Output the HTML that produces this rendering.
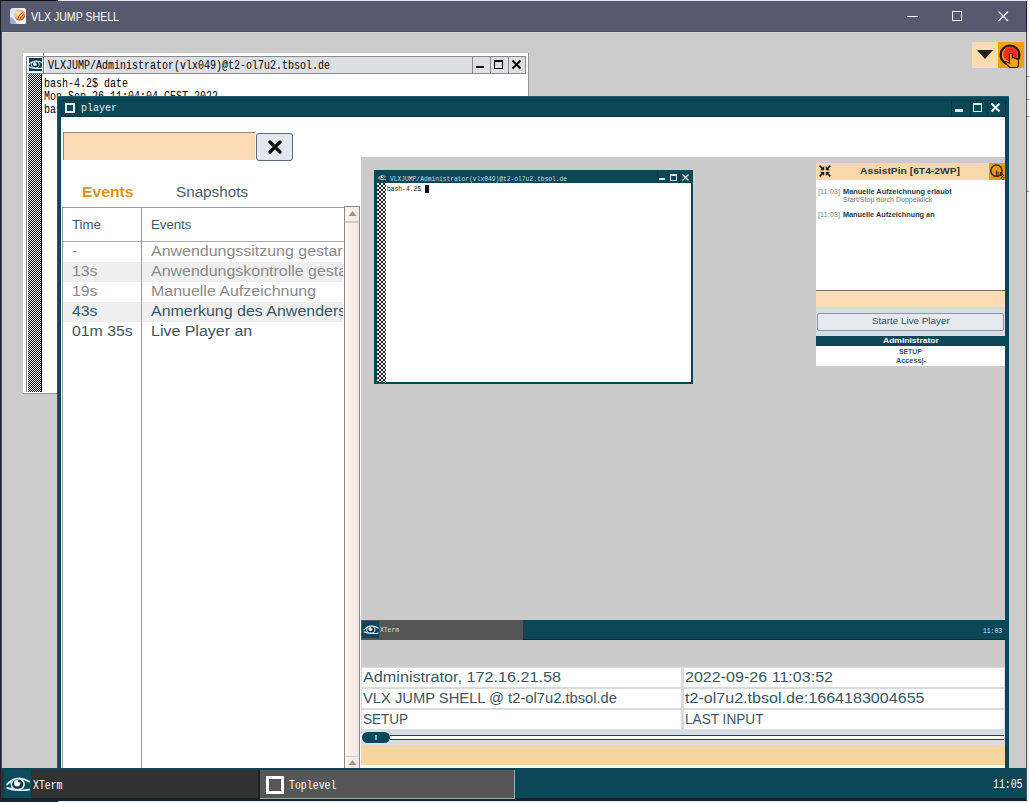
<!DOCTYPE html>
<html><head><meta charset="utf-8">
<style>
*{margin:0;padding:0;box-sizing:border-box}
html,body{width:1029px;height:802px;overflow:hidden;background:#eeeef2;font-family:"Liberation Sans",sans-serif}
.a{position:absolute}
.t{white-space:pre}
</style></head><body>
<div class="a" style="left:0px;top:0px;width:1027px;height:802px;background:#1c1f2c"></div>
<div class="a" style="left:1026px;top:32px;width:1px;height:768px;background:#505050"></div>
<div class="a" style="left:1027px;top:76px;width:2px;height:1px;background:#777"></div>
<div class="a" style="left:1027px;top:99px;width:2px;height:1px;background:#777"></div>
<div class="a" style="left:1027px;top:116px;width:2px;height:1px;background:#777"></div>
<div class="a" style="left:1027px;top:191px;width:2px;height:1px;background:#777"></div>
<div class="a" style="left:0px;top:0px;width:58px;height:1px;background:#0e1020"></div>
<div class="a" style="left:58px;top:0px;width:971px;height:1px;background:#e8e8f2"></div>
<div class="a" style="left:1px;top:1px;width:1025px;height:31px;background:#555a6e"></div>
<div class="a" style="left:1px;top:32px;width:1025px;height:736px;background:#4a4e5e"></div>
<div class="a" style="left:2px;top:32px;width:1024px;height:736px;background:#cccccc"></div>
<div class="a" style="left:2px;top:32px;width:1024px;height:1px;background:#d4d4d8"></div>
<div class="a" style="left:1px;top:1px;width:1025px;height:31px;background:#555a6e"></div>
<div class="a" style="left:1px;top:31px;width:1025px;height:1px;background:#505468"></div>
<div class="a t" style="left:31px;top:10.80px;font-family:'Liberation Sans',sans-serif;font-size:12px;line-height:12px;color:#fff;transform:scaleX(0.8816);transform-origin:0 0;">VLX JUMP SHELL</div>
<div class="a" style="left:907px;top:16px;width:11px;height:1px;background:#fff"></div>
<div class="a" style="left:952px;top:11px;width:10px;height:10px;border:1px solid #fff"></div>
<svg class="a" style="left:997px;top:10px" width="12" height="12"><path d="M1.5 1.5L11 11M11 1.5L1.5 11" stroke="#fff" stroke-width="1.2"/></svg>
<div class="a" style="left:972px;top:42px;width:26px;height:26px;background:#fbdcb0"></div>
<svg class="a" style="left:977px;top:50px" width="16" height="9"><path d="M0 0H16L8 9Z" fill="#222"/></svg>
<div class="a" style="left:998px;top:42px;width:26px;height:26px;background:#efa012"></div>
<div class="a" style="left:23px;top:53px;width:506px;height:341px;background:#fff;border-right:1px solid #999;border-bottom:1px solid #999"></div>
<div class="a" style="left:26px;top:56px;width:500px;height:18px;background:#dcdfe3;border:1px solid #888"></div>
<div class="a" style="left:27px;top:57px;width:16px;height:16px;background:#eef6f8"></div>
<div class="a" style="left:29px;top:58px;width:13px;height:13px;background:#0a3e50"></div>
<div class="a" style="left:43px;top:53px;width:1px;height:20px;background:#7a7a7a"></div>
<div class="a" style="left:44px;top:57px;width:1px;height:16px;background:#fff"></div>
<div class="a t" style="left:48px;top:58.74px;font-family:'Liberation Mono',monospace;font-size:13.5px;line-height:13.5px;color:#000;transform:scaleX(0.7406);transform-origin:0 0;">VLXJUMP/Administrator(vlx049)@t2-ol7u2.tbsol.de</div>
<div class="a" style="left:28px;top:74px;width:13px;height:318px;background:repeating-conic-gradient(#000 0 25%,#fff 0 50%) 0 0/2px 2px"></div>
<div class="a" style="left:41px;top:74px;width:1px;height:318px;background:#000"></div>
<div class="a" style="left:26px;top:74px;width:1px;height:318px;background:#888"></div>
<div class="a t" style="left:44px;top:77.12px;font-family:'Liberation Mono',monospace;font-size:13px;line-height:13px;color:#000;transform:scaleX(0.7691);transform-origin:0 0;">bash-4.2$ date</div>
<div class="a t" style="left:44px;top:90.12px;font-family:'Liberation Mono',monospace;font-size:13px;line-height:13px;color:#000;transform:scaleX(0.7691);transform-origin:0 0;">Mon Sep 26 11:04:04 CEST 2022</div>
<div class="a t" style="left:44px;top:103.12px;font-family:'Liberation Mono',monospace;font-size:13px;line-height:13px;color:#000;transform:scaleX(0.7691);transform-origin:0 0;">bash-4.2$ </div>
<div class="a" style="left:57px;top:96px;width:952px;height:672px;background:#0a4858"></div>
<div class="a" style="left:61px;top:117px;width:944px;height:651px;background:#fff"></div>
<div class="a" style="left:57px;top:96px;width:952px;height:1px;background:#1b5c72"></div>
<div class="a" style="left:57px;top:96px;width:1px;height:672px;background:#1b5c72"></div>
<div class="a" style="left:61px;top:100px;width:944px;height:1px;background:#073646"></div>
<div class="a" style="left:61px;top:116px;width:944px;height:1px;background:#073646"></div>
<div class="a" style="left:61px;top:100px;width:1px;height:17px;background:#073646"></div>
<div class="a" style="left:77px;top:100px;width:1px;height:17px;background:#073646"></div>
<div class="a" style="left:65px;top:103px;width:10px;height:10px;border:2px solid #e6f4f7"></div>
<div class="a t" style="left:81px;top:103.90px;font-family:'Liberation Mono',monospace;font-size:10px;line-height:10px;color:#dff2f6;transform:scaleX(0.9997);transform-origin:0 0;">player</div>
<div class="a" style="left:63px;top:132px;width:192px;height:28px;background:#fddbb4;border-top:1px solid #a08870;border-left:1px solid #a08870"></div>
<div class="a" style="left:256px;top:133px;width:37px;height:28px;background:#e4e8ee;border:1px solid #5a6a7a;border-radius:3px"></div>
<div class="a t" style="left:82px;top:185.10px;font-family:'Liberation Sans',sans-serif;font-size:14px;line-height:14px;color:#e0901a;font-weight:bold;transform:scaleX(1.1218);transform-origin:0 0;">Events</div>
<div class="a t" style="left:176px;top:185.10px;font-family:'Liberation Sans',sans-serif;font-size:14px;line-height:14px;color:#4a6070;transform:scaleX(1.0883);transform-origin:0 0;">Snapshots</div>
<div class="a" style="left:62px;top:207px;width:282px;height:561px;border-top:1px solid #999;border-left:1px solid #999"></div>
<div class="a" style="left:63px;top:241px;width:281px;height:1px;background:#aaa"></div>
<div class="a" style="left:141px;top:208px;width:1px;height:560px;background:#999"></div>
<div class="a t" style="left:72px;top:218.50px;font-family:'Liberation Sans',sans-serif;font-size:12px;line-height:12px;color:#405868;transform:scaleX(1.1060);transform-origin:0 0;">Time</div>
<div class="a t" style="left:151px;top:218.50px;font-family:'Liberation Sans',sans-serif;font-size:12px;line-height:12px;color:#405868;transform:scaleX(1.1012);transform-origin:0 0;">Events</div>
<div class="a" style="left:361px;top:157px;width:644px;height:483px;background:#cbcbcb"></div>
<div class="a" style="left:361px;top:620px;width:644px;height:20px;background:#0a4858"></div>
<div class="a" style="left:361px;top:639px;width:644px;height:1px;background:#062c38"></div>
<div class="a" style="left:361px;top:620px;width:162px;height:20px;background:#555"></div>
<div class="a" style="left:361px;top:640px;width:644px;height:28px;background:#cbcbcb"></div>
<div class="a" style="left:1px;top:768px;width:1025px;height:32px;background:#0a4858"></div>
<div class="a" style="left:1px;top:798px;width:1025px;height:3px;background:#14222a"></div>
<div class="a" style="left:58px;top:801px;width:971px;height:1px;background:#e6e6ee"></div>
<div class="a" style="left:2px;top:770px;width:256px;height:28px;background:#333232"></div>
<div class="a" style="left:258px;top:770px;width:2px;height:29px;background:#1a2428"></div>
<div class="a" style="left:260px;top:770px;width:255px;height:28px;background:#565656"></div>
<div class="a" style="left:63px;top:242px;width:280px;height:526px;overflow:hidden">
<div class="a" style="left:0px;top:20px;width:280px;height:20px;background:#efefef"></div>
<div class="a" style="left:0px;top:60px;width:280px;height:20px;background:#efefef"></div>
</div>
<div class="a" style="left:141px;top:242px;width:1px;height:526px;background:#999"></div>
<div class="a" style="left:63px;top:242px;width:280px;height:526px;overflow:hidden">
<div class="a t" style="left:9px;top:2.10px;font-family:'Liberation Sans',sans-serif;font-size:14px;line-height:14px;color:#8a8a8a;transform:scaleX(1.1300);transform-origin:0 0;">-</div>
<div class="a t" style="left:88px;top:2.10px;font-family:'Liberation Sans',sans-serif;font-size:14px;line-height:14px;color:#8a8a8a;transform:scaleX(1.1400);transform-origin:0 0;">Anwendungssitzung gestartet</div>
<div class="a t" style="left:9px;top:22.10px;font-family:'Liberation Sans',sans-serif;font-size:14px;line-height:14px;color:#8a8a8a;transform:scaleX(1.1300);transform-origin:0 0;">13s</div>
<div class="a t" style="left:88px;top:22.10px;font-family:'Liberation Sans',sans-serif;font-size:14px;line-height:14px;color:#8a8a8a;transform:scaleX(1.1400);transform-origin:0 0;">Anwendungskontrolle gestartet</div>
<div class="a t" style="left:9px;top:42.10px;font-family:'Liberation Sans',sans-serif;font-size:14px;line-height:14px;color:#8a8a8a;transform:scaleX(1.1300);transform-origin:0 0;">19s</div>
<div class="a t" style="left:88px;top:42.10px;font-family:'Liberation Sans',sans-serif;font-size:14px;line-height:14px;color:#8a8a8a;transform:scaleX(1.1400);transform-origin:0 0;">Manuelle Aufzeichnung</div>
<div class="a t" style="left:9px;top:62.10px;font-family:'Liberation Sans',sans-serif;font-size:14px;line-height:14px;color:#385565;transform:scaleX(1.1300);transform-origin:0 0;">43s</div>
<div class="a t" style="left:88px;top:62.10px;font-family:'Liberation Sans',sans-serif;font-size:14px;line-height:14px;color:#385565;transform:scaleX(1.1400);transform-origin:0 0;">Anmerkung des Anwenders</div>
<div class="a t" style="left:9px;top:82.10px;font-family:'Liberation Sans',sans-serif;font-size:14px;line-height:14px;color:#385565;transform:scaleX(1.1300);transform-origin:0 0;">01m 35s</div>
<div class="a t" style="left:88px;top:82.10px;font-family:'Liberation Sans',sans-serif;font-size:14px;line-height:14px;color:#385565;transform:scaleX(1.1400);transform-origin:0 0;">Live Player an</div>
</div>
<div class="a" style="left:344px;top:206px;width:16px;height:562px;border:1px solid #8a8a8a;border-bottom:none;background:linear-gradient(90deg,#fbf7f4,#f3e4e2)"></div>
<div class="a" style="left:345px;top:221px;width:14px;height:2px;background:#dcc8c4"></div>
<svg class="a" style="left:347px;top:209px" width="11" height="8"><path d="M1.5 7H9.5L5.5 2Z" fill="#999"/></svg>
<div class="a" style="left:345px;top:756px;width:14px;height:1px;background:#dcc8c4"></div>
<svg class="a" style="left:347px;top:758px" width="11" height="8"><path d="M1.5 7H9.5L5.5 2Z" fill="#999"/></svg>
<div class="a" style="left:361px;top:667px;width:644px;height:78px;background:#d6dde4"></div>
<div class="a" style="left:361px;top:667px;width:644px;height:62px;background:#dadada"></div>
<div class="a" style="left:362px;top:668px;width:319px;height:19px;background:#fff"></div>
<div class="a" style="left:684px;top:668px;width:320px;height:19px;background:#fff"></div>
<div class="a" style="left:362px;top:689px;width:319px;height:19px;background:#fff"></div>
<div class="a" style="left:684px;top:689px;width:320px;height:19px;background:#fff"></div>
<div class="a" style="left:362px;top:710px;width:319px;height:19px;background:#fff"></div>
<div class="a" style="left:684px;top:710px;width:320px;height:19px;background:#fff"></div>
<div class="a t" style="left:363px;top:670.10px;font-family:'Liberation Sans',sans-serif;font-size:14px;line-height:14px;color:#38566a;transform:scaleX(1.1564);transform-origin:0 0;">Administrator, 172.16.21.58</div>
<div class="a t" style="left:685px;top:670.10px;font-family:'Liberation Sans',sans-serif;font-size:14px;line-height:14px;color:#38566a;transform:scaleX(1.1477);transform-origin:0 0;">2022-09-26 11:03:52</div>
<div class="a t" style="left:363px;top:691.10px;font-family:'Liberation Sans',sans-serif;font-size:14px;line-height:14px;color:#38566a;transform:scaleX(1.0520);transform-origin:0 0;">VLX JUMP SHELL @ t2-ol7u2.tbsol.de</div>
<div class="a t" style="left:685px;top:691.10px;font-family:'Liberation Sans',sans-serif;font-size:14px;line-height:14px;color:#38566a;transform:scaleX(1.1480);transform-origin:0 0;">t2-ol7u2.tbsol.de:1664183004655</div>
<div class="a t" style="left:363px;top:712.10px;font-family:'Liberation Sans',sans-serif;font-size:14px;line-height:14px;color:#38566a;transform:scaleX(0.9641);transform-origin:0 0;">SETUP</div>
<div class="a t" style="left:685px;top:712.10px;font-family:'Liberation Sans',sans-serif;font-size:14px;line-height:14px;color:#38566a;transform:scaleX(0.9734);transform-origin:0 0;">LAST INPUT</div>
<div class="a" style="left:361px;top:729px;width:644px;height:16px;background:#d6dde4"></div>
<div class="a" style="left:390px;top:735px;width:614px;height:5px;border-top:1px solid #0a4858;border-bottom:1px solid #0a4858;background:#fff"></div>
<div class="a" style="left:362px;top:732px;width:28px;height:11px;background:#0a4858;border-radius:6px"></div>
<div class="a" style="left:375px;top:735px;width:2px;height:5px;background:#7fb4c8"></div>
<div class="a" style="left:361px;top:745px;width:644px;height:20px;background:#f5d5a2"></div>
<div class="a" style="left:361px;top:765px;width:644px;height:3px;background:#fffdf5"></div>
<div class="a" style="left:374px;top:170px;width:319px;height:214px;background:#0a4858"></div>
<div class="a" style="left:386px;top:183px;width:305px;height:199px;background:#fff"></div>
<div class="a" style="left:377px;top:183px;width:9px;height:199px;background:repeating-conic-gradient(#222 0 25%,#eee 0 50%) 0 0/4px 4px"></div>
<div class="a t" style="left:390px;top:175.68px;font-family:'Liberation Mono',monospace;font-size:7px;line-height:7px;color:#c8dce4;transform:scaleX(0.8967);transform-origin:0 0;">VLXJUMP/Administrator(vlx049)@t2-ol7u2.tbsol.de</div>
<div class="a t" style="left:387px;top:186.18px;font-family:'Liberation Mono',monospace;font-size:7px;line-height:7px;color:#222;transform:scaleX(0.8995);transform-origin:0 0;">bash-4.2$</div>
<div class="a" style="left:425px;top:185px;width:4px;height:8px;background:#000"></div>
<div class="a" style="left:659px;top:178px;width:6px;height:2px;background:#d8e4ea"></div>
<div class="a" style="left:670px;top:174px;width:7px;height:7px;border:1px solid #d8e4ea;border-top-width:2px"></div>
<svg class="a" style="left:681px;top:173px" width="9" height="9"><path d="M1.5 1.5L7.5 7.5M7.5 1.5L1.5 7.5" stroke="#e8f0f4" stroke-width="1.3"/></svg>
<div class="a" style="left:657px;top:171px;width:1px;height:12px;background:#0a3a4a"></div>
<div class="a" style="left:668px;top:171px;width:1px;height:12px;background:#0a3a4a"></div>
<div class="a" style="left:679px;top:171px;width:1px;height:12px;background:#0a3a4a"></div>
<div class="a" style="left:816px;top:163px;width:189px;height:203px;background:#fff"></div>
<div class="a" style="left:816px;top:163px;width:189px;height:17px;background:#f8d8a8"></div>
<div class="a" style="left:989px;top:163px;width:16px;height:17px;background:#e69a1e"></div>
<div class="a t" style="left:860px;top:166.55px;font-family:'Liberation Sans',sans-serif;font-size:9px;line-height:9px;color:#1e3c48;font-weight:bold;transform:scaleX(1.1427);transform-origin:0 0;">AssistPin [6T4-2WP]</div>
<div class="a t" style="left:818px;top:188.05px;font-family:'Liberation Sans',sans-serif;font-size:7px;line-height:7px;color:#7a8a95;transform:scaleX(1.0530);transform-origin:0 0;">[11:03]</div>
<div class="a t" style="left:843px;top:188.05px;font-family:'Liberation Sans',sans-serif;font-size:7px;line-height:7px;color:#1e3c48;font-weight:bold;transform:scaleX(1.0532);transform-origin:0 0;">Manuelle Aufzeichnung erlaubt</div>
<div class="a t" style="left:843px;top:196.05px;font-family:'Liberation Sans',sans-serif;font-size:7px;line-height:7px;color:#6a7a85;transform:scaleX(1.0076);transform-origin:0 0;">Start/Stop durch Doppelklick</div>
<div class="a t" style="left:818px;top:210.75px;font-family:'Liberation Sans',sans-serif;font-size:7px;line-height:7px;color:#7a8a95;transform:scaleX(1.0530);transform-origin:0 0;">[11:03]</div>
<div class="a t" style="left:843px;top:210.75px;font-family:'Liberation Sans',sans-serif;font-size:7px;line-height:7px;color:#1e3c48;font-weight:bold;transform:scaleX(1.0405);transform-origin:0 0;">Manuelle Aufzeichnung an</div>
<div class="a" style="left:816px;top:290px;width:189px;height:17px;background:#fddbb4;border-top:1px solid #6a6a6a"></div>
<div class="a" style="left:816px;top:307px;width:189px;height:29px;background:#d5dde5"></div>
<div class="a" style="left:817px;top:313px;width:187px;height:18px;background:#e6eaef;border:1px solid #8a9aa8;border-radius:2px"></div>
<div class="a t" style="left:872px;top:317.45px;font-family:'Liberation Sans',sans-serif;font-size:9px;line-height:9px;color:#3a4a55;transform:scaleX(1.0939);transform-origin:0 0;">Starte Live Player</div>
<div class="a" style="left:816px;top:336px;width:189px;height:10px;background:#0a4858"></div>
<div class="a t" style="left:883px;top:337.20px;font-family:'Liberation Sans',sans-serif;font-size:8px;line-height:8px;color:#fff;font-weight:bold;transform:scaleX(1.0637);transform-origin:0 0;">Administrator</div>
<div class="a t" style="left:899.4px;top:347.82px;font-family:'Liberation Sans',sans-serif;font-size:7.5px;line-height:7.5px;color:#3a5868;font-weight:bold;transform:scaleX(0.9078);transform-origin:0 0;">SETUP</div>
<div class="a t" style="left:895.5px;top:357.23px;font-family:'Liberation Sans',sans-serif;font-size:7.5px;line-height:7.5px;color:#3a5868;font-weight:bold;transform:scaleX(0.9718);transform-origin:0 0;">Access|-</div>
<div class="a" style="left:362px;top:621px;width:17px;height:17px;background:#0e4858"></div>
<div class="a t" style="left:380px;top:627.48px;font-family:'Liberation Mono',monospace;font-size:7px;line-height:7px;color:#ddd;transform:scaleX(0.9048);transform-origin:0 0;">XTerm</div>
<div class="a t" style="left:983px;top:627.68px;font-family:'Liberation Mono',monospace;font-size:7px;line-height:7px;color:#cfe0e8;transform:scaleX(0.9048);transform-origin:0 0;">11:03</div>
<svg width="0" height="0" style="position:absolute"><defs>
<symbol id="eye" viewBox="0 0 24 14">
<path d="M0.5 7.8Q11 -3.2 23.8 5" fill="none" stroke="#dff3f7" stroke-width="1.7"/>
<path d="M0.5 10.6Q13 15.2 23.8 12.4" fill="none" stroke="#dff3f7" stroke-width="1.7"/>
<ellipse cx="11.7" cy="7.2" rx="6.4" ry="5.4" fill="#08303e" stroke="#dff3f7" stroke-width="1.6"/>
<circle cx="11.2" cy="6.3" r="3.2" fill="#f2fbfd"/>
<circle cx="13.6" cy="4.2" r="1.4" fill="#08303e"/>
</symbol>
<symbol id="touch" viewBox="0 0 26 26">
<circle cx="12" cy="13" r="9.4" fill="none" stroke="#2a1608" stroke-width="2.3"/>
<circle cx="12.6" cy="12.2" r="7.3" fill="#ff2a1e"/>
<path d="M12.8 11.3c1-0.1 1.5 0.5 1.5 1.3v3.2c1-0.5 2.2-0.2 2.4 0.6c0.9-0.3 1.9 0 2.1 0.8c0.8-0.2 1.6 0.2 1.7 1v4.2c0 1.4-0.6 2.4-1.4 3.1H11.8L7.4 21c-0.5-0.6 0.1-1.6 1-1.3l3 1.4v-8.4c0-0.8 0.5-1.4 1.4-1.4z" fill="#f0a41a" stroke="#2a1608" stroke-width="1.1"/>
</symbol>
</defs></svg>
<div class="a" style="left:4px;top:770px;width:27px;height:28px;background:#0e4a5c"></div>
<svg class="a" style="left:6px;top:777px" width="24" height="14"><use href="#eye"/></svg>
<div class="a t" style="left:33px;top:778.74px;font-family:'Liberation Mono',monospace;font-size:13.5px;line-height:13.5px;color:#fff;transform:scaleX(0.7283);transform-origin:0 0;">XTerm</div>
<div class="a" style="left:266px;top:776px;width:18px;height:18px;border:3px solid #fff"></div>
<div class="a t" style="left:289px;top:778.74px;font-family:'Liberation Mono',monospace;font-size:13.5px;line-height:13.5px;color:#fff;transform:scaleX(0.7329);transform-origin:0 0;">Toplevel</div>
<div class="a" style="left:514px;top:770px;width:1px;height:29px;background:#9aa"></div>
<div class="a" style="left:260px;top:798px;width:255px;height:1px;background:#9aa"></div>
<div class="a t" style="left:993px;top:778.24px;font-family:'Liberation Mono',monospace;font-size:13.5px;line-height:13.5px;color:#fff;transform:scaleX(0.7283);transform-origin:0 0;">11:05</div>
<svg class="a" style="left:28px;top:60px" width="15" height="9"><use href="#eye"/></svg>
<svg class="a" style="left:363px;top:625px" width="16" height="9"><use href="#eye"/></svg>
<svg class="a" style="left:378px;top:175px" width="8" height="5"><use href="#eye"/></svg>
<svg class="a" style="left:998px;top:42px" width="26" height="26"><use href="#touch"/></svg>
<svg class="a" style="left:989px;top:163px" width="16" height="20"><circle cx="7.4" cy="7.7" r="5.6" fill="none" stroke="#4a2208" stroke-width="1.5"/><path d="M7.5 7.5V13M9 8.5V12" stroke="#4a2208" stroke-width="1"/><path d="M11 9.5L15 12.5M11.5 12L15 15M12 14.5L14.5 17" stroke="#000" stroke-width="1.3" stroke-dasharray="1.2 0.8"/></svg>
<svg class="a" style="left:268px;top:140px" width="14" height="14"><path d="M2 2L12 12M12 2L2 12" stroke="#111" stroke-width="3.2" stroke-linecap="round"/></svg>
<svg class="a" style="left:819px;top:165px" width="12" height="12"><g fill="#1a1a1a" stroke="#1a1a1a"><path d="M0.6 0.6L3.6 3.6" stroke-width="1.5"/><path d="M5 5V1.6L1.6 5Z" stroke-width="0.4"/><path d="M11.4 0.6L8.4 3.6" stroke-width="1.5"/><path d="M7 5V1.6L10.4 5Z" stroke-width="0.4"/><path d="M0.6 11.4L3.6 8.4" stroke-width="1.5"/><path d="M5 7V10.4L1.6 7Z" stroke-width="0.4"/><path d="M11.4 11.4L8.4 8.4" stroke-width="1.5"/><path d="M7 7V10.4L10.4 7Z" stroke-width="0.4"/></g></svg>
<svg class="a" style="left:10px;top:8px" width="16" height="16"><defs><linearGradient id="lg" x1="0" x2="1" y1="0" y2="0.3"><stop offset="0" stop-color="#c4d6f2"/><stop offset="0.5" stop-color="#eef2fa"/><stop offset="1" stop-color="#fff"/></linearGradient><radialGradient id="rg" cx="0.35" cy="0.35" r="0.7"><stop offset="0" stop-color="#fbe6c0"/><stop offset="0.6" stop-color="#eeb070"/><stop offset="1" stop-color="#d8782a"/></radialGradient></defs>
<rect x="0" y="0" width="16" height="16" rx="2.5" fill="url(#lg)"/><path d="M0 9Q4 10 7 16H2.5Q0 16 0 13.5Z" fill="#7d95c4" opacity="0.7"/><circle cx="9.6" cy="7" r="5.6" fill="url(#rg)"/><path d="M7.5 12Q8 7 12.5 4.5M9.5 12.5Q10 8.5 13.8 6.5M11.5 12.5Q12 10 14.8 8.8" fill="none" stroke="#a4500e" stroke-width="1"/><path d="M11 12.5H16V14Q16 16 14 16H11Z" fill="#fff"/></svg>
<div class="a" style="left:472px;top:57px;width:1px;height:16px;background:#8a8a8a"></div>
<div class="a" style="left:490px;top:57px;width:1px;height:16px;background:#8a8a8a"></div>
<div class="a" style="left:508px;top:57px;width:1px;height:16px;background:#8a8a8a"></div>
<div class="a" style="left:525px;top:57px;width:1px;height:16px;background:#8a8a8a"></div>
<div class="a" style="left:476px;top:66px;width:8px;height:2px;background:#000"></div>
<div class="a" style="left:494px;top:60px;width:9px;height:9px;border:1px solid #000;border-top-width:2px"></div>
<svg class="a" style="left:511px;top:59px" width="11" height="11"><path d="M1.5 1.5L9.5 9.5M9.5 1.5L1.5 9.5" stroke="#000" stroke-width="2"/></svg>
<div class="a" style="left:951px;top:100px;width:1px;height:17px;background:#073646"></div>
<div class="a" style="left:970px;top:100px;width:1px;height:17px;background:#073646"></div>
<div class="a" style="left:987px;top:100px;width:1px;height:17px;background:#073646"></div>
<div class="a" style="left:1005px;top:100px;width:1px;height:17px;background:#073646"></div>
<div class="a" style="left:955px;top:109px;width:8px;height:3px;background:#e6f4f7"></div>
<div class="a" style="left:973px;top:103px;width:9px;height:9px;border:1px solid #e6f4f7;border-top-width:2px"></div>
<svg class="a" style="left:990px;top:102px" width="11" height="11"><path d="M1.5 1.5L9.5 9.5M9.5 1.5L1.5 9.5" stroke="#f0f8fa" stroke-width="2"/></svg>
</body></html>
